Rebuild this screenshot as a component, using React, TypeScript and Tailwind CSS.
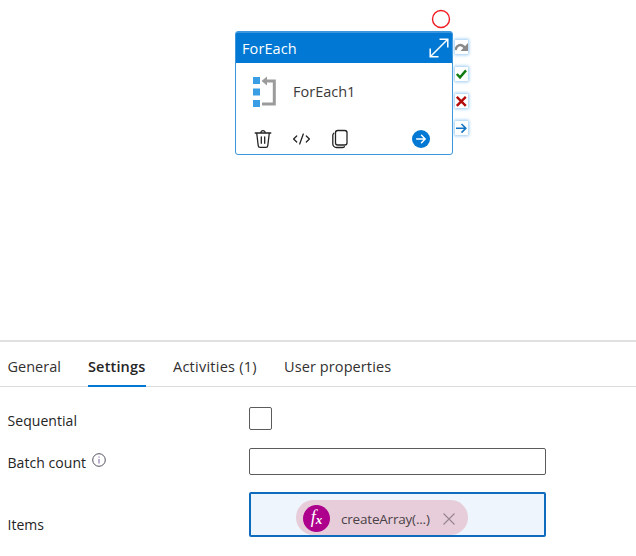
import type { ReactNode } from "react";

type TabItem = {
  label: string;
  className: string;
  active?: boolean;
};

const tabs: TabItem[] = [
  { label: "General", className: "w-[53px] tracking-[0px]" },
  { label: "Settings", className: "ml-[27.5px] w-[58px] tracking-[0.15px]", active: true },
  { label: "Activities (1)", className: "ml-[27px] w-[84px] tracking-[0.25px]" },
  { label: "User properties", className: "ml-[27px] w-[108px] tracking-[0.1px]" },
];

function Port({ children }: { children: ReactNode }) {
  return (
    <div className="flex h-[14px] w-[13px] items-center justify-center bg-white shadow-[0_0_3px_1px_#9ccbf2]">
      <svg className="shrink-0" width="13" height="14" viewBox="0 0 13 14" fill="none">
        {children}
      </svg>
    </div>
  );
}

function ForEachIcon() {
  return (
    <svg width="24" height="32" viewBox="0 0 24 32" fill="none">
      <path d="M0 1h7v7H0zM0 12.500h7v7H0zM0 24h7v7H0z" fill="#3a9ee4" />
      <path d="M13 5h8.300v23H9" stroke="#9b9b9b" strokeWidth="3" />
      <path d="M8.500 5l5.500-4.500v9z" fill="#9b9b9b" />
    </svg>
  );
}

function ActivityCard() {
  return (
    <div className="absolute left-[235px] top-[31px] h-[124px] w-[218px] overflow-hidden rounded-[3px] border border-[#3b96dd] bg-white">
      <div className="flex h-[31px] items-center justify-between border-t border-[#3b96dd] bg-[#0078d4] pl-[6px] pr-[3px]">
        <span className="pt-px text-[14.500px] leading-[20px] tracking-[0.1px] text-white">ForEach</span>
        <svg width="20" height="20" viewBox="0 0 20 20" fill="none" stroke="white" strokeWidth="1.500">
          <path d="M1.500 18.500l17-17M10.500 1.200h8.300v8.300M1.200 10.500v8.300h8.300" />
        </svg>
      </div>
      <div className="flex h-[58px] items-center pl-[17px]">
        <ForEachIcon />
        <span className="ml-[16px] text-[14.500px] leading-[20px] tracking-[0px] text-[#3b3a39]">ForEach1</span>
      </div>
      <div className="flex h-[34px] items-center pl-[18px] pt-[2px] text-[#242424]">
        <svg width="18" height="20" viewBox="0 0 18 20" fill="none" stroke="currentColor" strokeWidth="1.300" strokeLinecap="round" strokeLinejoin="round">
          <path d="M1.200 4h15.600M6.700 4a2.300 2.300 0 0 1 4.600 0M2.700 4l1.500 12.500a2 2 0 0 0 2 1.900h5.600a2 2 0 0 0 2-1.900L15.300 4M7.300 8v6.300M10.700 8v6.300" />
        </svg>
        <svg className="ml-[20px]" width="19" height="16" viewBox="0 0 19 16" fill="none" stroke="currentColor" strokeWidth="1.300" strokeLinecap="round" strokeLinejoin="round">
          <path d="M4.700 5L1.600 8l3.100 3M14.300 5l3.100 3-3.100 3M11.300 3l-3.600 10" />
        </svg>
        <svg className="ml-[20px]" width="18" height="20" viewBox="0 0 18 20" fill="none" stroke="currentColor" strokeWidth="1.300" strokeLinecap="round">
          <rect x="4.500" y="1.500" width="11.500" height="14.500" rx="2.200" />
          <path d="M2.800 4.200q-1 .8-1 2v8.600a3.600 3.600 0 0 0 3.600 3.700h6q1.200 0 2-.8" />
        </svg>
        <svg className="ml-[63px]" width="18" height="18" viewBox="0 0 18 18" fill="none">
          <circle cx="9" cy="9" r="9" fill="#0078d4" />
          <path d="M4.700 9h8.300M9.500 5.300L13.200 9l-3.700 3.700" stroke="white" strokeWidth="1.500" strokeLinecap="round" strokeLinejoin="round" />
        </svg>
      </div>
    </div>
  );
}

function Canvas() {
  return (
    <div className="relative h-[340px]">
      <svg className="absolute left-[431px] top-[9px]" width="20" height="20" viewBox="0 0 20 20" fill="none">
        <circle cx="10" cy="10" r="8.500" stroke="#f21c24" strokeWidth="1.400" />
      </svg>
      <ActivityCard />
      <div className="absolute left-[455px] top-[40px] flex flex-col gap-[13px]">
        <Port>
          <path d="M.5 10C1.500 4.500 6.500 3 10 8" stroke="#8a8a8a" strokeWidth="2.400" />
          <path d="M13 3v8H5.500z" fill="#8a8a8a" />
        </Port>
        <Port>
          <path d="M1.800 7l3.200 3.400 6-7" stroke="#107c10" strokeWidth="2.400" />
        </Port>
        <Port>
          <path d="M1.800 2.800l9 9M10.800 2.800l-9 9" stroke="#b30a0a" strokeWidth="2.400" />
        </Port>
        <Port>
          <path d="M1 7.300h10M6.500 3l4.300 4.300-4.300 4.300" stroke="#1474c4" strokeWidth="1.600" />
        </Port>
      </div>
    </div>
  );
}

function Tabs() {
  return (
    <div className="flex h-[47px] items-end border-b border-t-2 border-b-[#dcdcdc] border-t-[#e0e0e0] pl-[7.5px]">
      {tabs.map((tab) => (
        <div
          key={tab.label}
          className={`-mb-px h-[34px] whitespace-nowrap text-[14.500px] leading-[27px] ${tab.className} ${
            tab.active ? "border-b-2 border-[#0078d4] font-semibold text-[#242424]" : "text-[#323130]"
          }`}
        >
          {tab.label}
        </div>
      ))}
    </div>
  );
}

function ExpressionPill() {
  return (
    <div className="ml-[45px] mt-[6px] flex h-[35px] w-[172px] items-center rounded-full bg-[#e7cdda] pl-[7px]">
      <span className="mt-px flex h-[27px] w-[27px] items-center justify-center rounded-full bg-[#ad008c] font-['Liberation_Serif',serif] italic leading-none text-white">
        <span className="-mt-[3px] text-[18px]">f</span>
        <span className="mt-[3px] text-[13px] font-bold">x</span>
      </span>
      <span className="ml-[11px] mt-[2px] w-[89px] whitespace-nowrap text-[13.500px] leading-[20px] tracking-[-0.2px] text-[#4b4247]">createArray(...)</span>
      <svg className="ml-[13px] mt-[2px]" width="12" height="12" viewBox="0 0 12 12" stroke="#96858e" strokeWidth="1.100">
        <path d="M.5.500l11 11M11.500.500l-11 11" />
      </svg>
    </div>
  );
}

function SettingsForm() {
  return (
    <div className="pl-[7.5px] pt-[20px] text-[14px] leading-[20px] text-[#242424]">
      <div className="flex h-[23px]">
        <span className="w-[241.5px] pt-[4px] tracking-[0.05px]">Sequential</span>
        <div className="h-[23px] w-[23px] rounded-[2px] border border-[#5b5b5b]" />
      </div>
      <div className="mt-[18px] flex h-[27px]">
        <div className="flex w-[241.5px] pt-[5px]">
          <span className="w-[84px] whitespace-nowrap tracking-[0.05px]">Batch count</span>
          <svg width="14" height="14" viewBox="0 0 14 14" fill="none" stroke="#555064">
            <circle cx="7" cy="7" r="6.300" />
            <path d="M7 6v4.500M7 3.500v1.200" stroke="#7961a5" />
          </svg>
        </div>
        <div className="w-[297px] rounded-[2px] border border-[#5b5b5b]" />
      </div>
      <div className="mt-[17px] flex h-[45px]">
        <span className="w-[241.5px] pt-[23px]">Items</span>
        <div className="w-[297px] overflow-hidden rounded-[2px] border-2 border-[#0f6cbd] bg-[#eef5fc]">
          <ExpressionPill />
        </div>
      </div>
    </div>
  );
}

export default function App() {
  return (
    <div className="h-[556px] w-[636px] overflow-hidden bg-white font-['Open_Sans','Noto_Sans',sans-serif]">
      <Canvas />
      <Tabs />
      <SettingsForm />
    </div>
  );
}
